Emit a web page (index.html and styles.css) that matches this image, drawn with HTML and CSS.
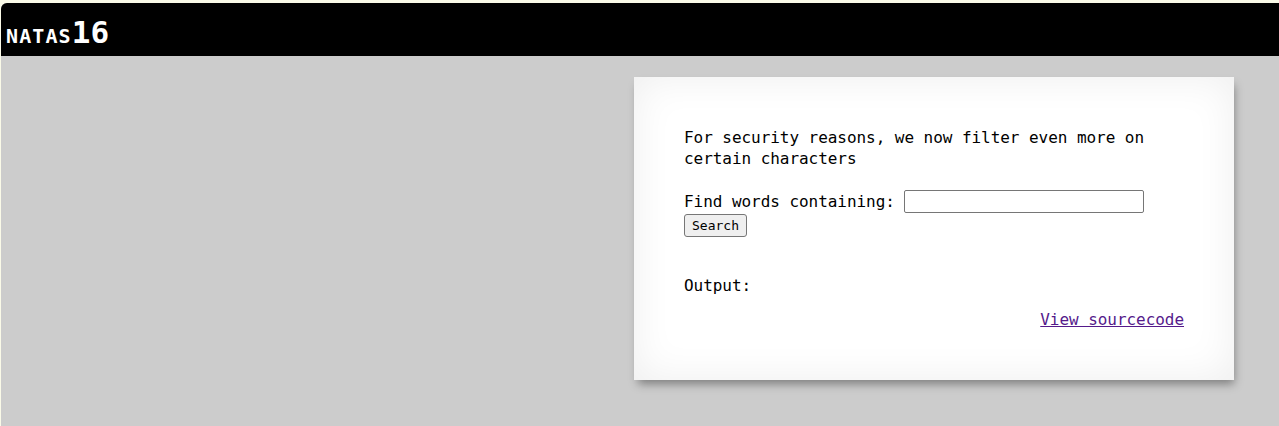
FILE: index.html
```
<!DOCTYPE html>
<html>
<head>
<meta charset="utf-8">
<title>natas16</title>
<link rel="stylesheet" href="styles.css">
</head>
<body>
<div class="page">
  <h1 class="title"><span class="title-name">NATAS</span><span class="title-num">16</span></h1>
  <div class="content">
    <p class="intro">For security reasons, we now filter even more on certain characters</p>
    <form class="search-form">
      <div class="field">Find words containing: <input class="needle" type="text" name="needle"></div>
      <div class="actions"><button class="submit" type="button">Search</button></div>
    </form>
    <div class="output">Output:</div>
    <div class="source"><a class="source-link" href="#">View sourcecode</a></div>
  </div>
</div>
</body>
</html>
```
FILE: styles.css
```
html, body {
  margin: 0;
  padding: 0;
  height: 100%;
}
body {
  background: #fafae8;
  font-family: "DejaVu Sans Mono", "Liberation Mono", monospace;
  color: #000;
  overflow: hidden;
}
.page {
  margin: 3px 0 0 1px;
  background: #ccc;
  min-height: 440px;
  border-top-left-radius: 6px;
  overflow: hidden;
}
.title {
  margin: 0;
  height: 53px;
  background: #000;
  color: #fff;
  display: flex;
  align-items: baseline;
  padding: 14px 0 0 5px;
  box-sizing: border-box;
  font-weight: bold;
  line-height: 30px;
}
.title-name {
  font-size: 20px;
  letter-spacing: 1.1px;
}
.title-num {
  font-size: 31px;
}
.content {
  margin: 21px 0 0 633px;
  width: 500px;
  padding: 50px;
  background: #fff;
  font-size: 16px;
  line-height: 21px;
  letter-spacing: -0.05px;
  box-shadow: inset 0 0 40px rgba(0, 0, 0, 0.07), 2px 6px 9px -2px rgba(0, 0, 0, 0.38);
}
.intro {
  margin: 0 0 21px 0;
}
.search-form {
  margin: 0;
}
.field {
  height: 24px;
  display: flex;
  align-items: flex-start;
  white-space: pre;
  line-height: 23px;
}
.needle {
  width: 240px;
  height: 23px;
  box-sizing: border-box;
  margin: 0;
  border: 1px solid #767676;
  border-radius: 2px;
  padding: 1px 2px;
  font-family: "DejaVu Sans Mono", monospace;
  font-size: 13px;
}
.actions {
  height: 23px;
  display: flex;
}
.submit {
  margin: 0;
  height: 23px;
  padding: 1px 7px;
  font-family: "DejaVu Sans Mono", monospace;
  font-size: 13px;
  line-height: 19px;
  color: #000;
  background: #efefef;
  border: 1px solid #767676;
  border-radius: 3px;
}
.output {
  margin-top: 38px;
}
.source {
  margin-top: 13px;
  text-align: right;
}
.source-link {
  color: #551a8b;
  text-decoration: underline;
}
```
